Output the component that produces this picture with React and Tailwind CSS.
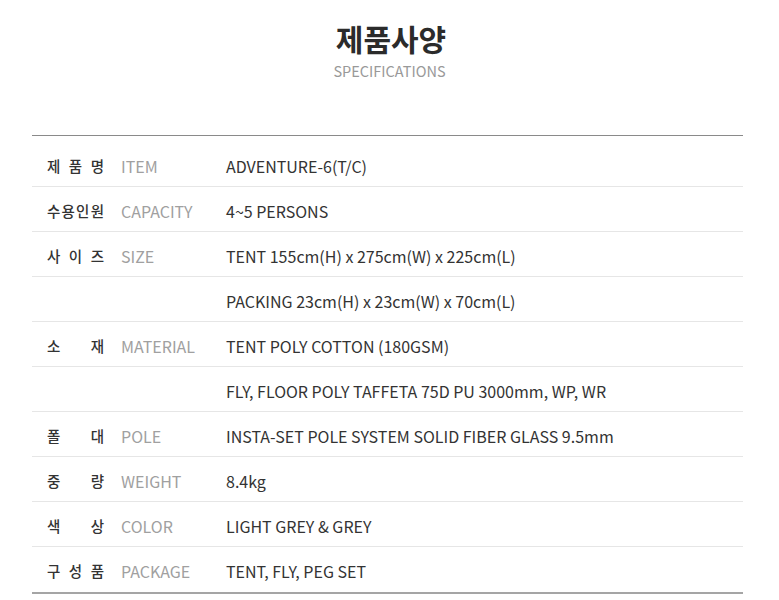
import React from 'react';

const specs = [
  { ko: '제품명', en: 'ITEM', value: 'ADVENTURE-6(T/C)' },
  { ko: '수용인원', en: 'CAPACITY', value: '4~5 PERSONS' },
  { ko: '사이즈', en: 'SIZE', value: 'TENT 155cm(H) x 275cm(W) x 225cm(L)' },
  { ko: '', en: '', value: 'PACKING 23cm(H) x 23cm(W) x 70cm(L)' },
  { ko: '소재', en: 'MATERIAL', value: 'TENT POLY COTTON (180GSM)' },
  { ko: '', en: '', value: 'FLY, FLOOR POLY TAFFETA 75D PU 3000mm, WP, WR' },
  { ko: '폴대', en: 'POLE', value: 'INSTA-SET POLE SYSTEM SOLID FIBER GLASS 9.5mm' },
  { ko: '중량', en: 'WEIGHT', value: '8.4kg' },
  { ko: '색상', en: 'COLOR', value: 'LIGHT GREY & GREY' },
  { ko: '구성품', en: 'PACKAGE', value: 'TENT, FLY, PEG SET' },
];

const SpecRow = ({ spec, first, last }) => (
  <div
    className={`flex items-center box-border ${first ? 'h-[51px] pt-[9px]' : 'h-[45px] pt-[3px]'} ${
      last ? '' : 'border-b border-[#e6e6e6]'
    }`}
  >
    <div className="w-[89px] pl-[15px] shrink-0">
      <span className="flex justify-between w-[57px] text-[14.5px] font-medium text-[#333]">
        {spec.ko.split('').map((ch, i) => (
          <span key={i}>{ch}</span>
        ))}
      </span>
    </div>
    <div className="w-[105px] shrink-0 text-[16px] text-[#a0a0a0]">{spec.en}</div>
    <div className="text-[16px] text-[#333]">{spec.value}</div>
  </div>
);

export default function App() {
  return (
    <div
      className="w-[779px] h-[600px] bg-white overflow-hidden"
      style={{ fontFamily: '"Noto Sans CJK KR", "Noto Sans", sans-serif' }}
    >
      <div className="flex flex-col items-center pt-[18px]">
        <h1 className="text-[30px] font-bold text-[#2b2b2b] leading-[40px] pl-[3px]">제품사양</h1>
        <p className="text-[14.5px] text-[#999] leading-[20px] mt-[3px]">SPECIFICATIONS</p>
      </div>
      <div className="w-[711px] ml-[32px] mt-[54px]">
        <div className="h-[1px] bg-[#8a8a8a]" />
        {specs.map((spec, i) => (
          <SpecRow key={i} spec={spec} first={i === 0} last={i === specs.length - 1} />
        ))}
        <div className="h-[2px] bg-[#a5a5a5]" />
      </div>
    </div>
  );
}
